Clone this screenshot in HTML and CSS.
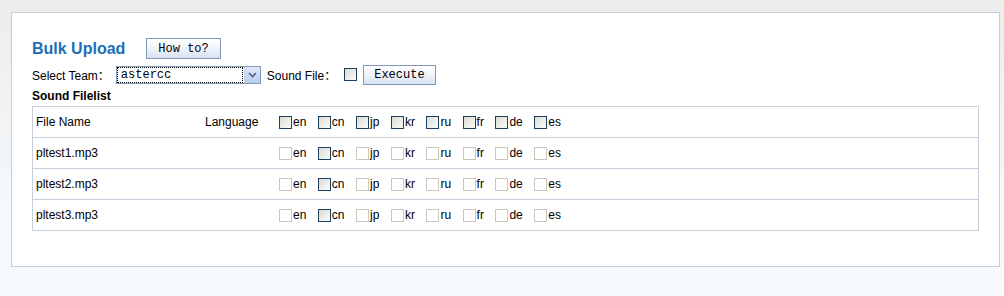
FILE: index.html
```html
<!DOCTYPE html>
<html lang="en">
<head>
  <meta charset="UTF-8">
  <title>Bulk Upload</title>
  <link rel="stylesheet" href="styles.css">
</head>
<body>
  <div class="panel">
    <div class="title-row">
      <h2 class="title">Bulk Upload</h2>
      <button class="btn">How to?</button>
    </div>

    <div class="form-row">
      <span class="label">Select Team：</span>
      <div class="select">
        <span class="select-value">astercc</span>
        <span class="select-arrow">
          <svg width="9" height="6" viewBox="0 0 9 6"><path d="M1 1 L4.5 4.5 L8 1" fill="none" stroke="#4d6185" stroke-width="1.6"/></svg>
        </span>
      </div>
      <span class="label sound">Sound File：</span>
      <span class="box box-plain"></span>
      <button class="btn btn-exec">Execute</button>
    </div>

    <div class="subtitle">Sound Filelist</div>

    <div class="filelist" id="filelist"></div>
  </div>

  <script>
    const langs = ['en', 'cn', 'jp', 'kr', 'ru', 'fr', 'de', 'es'];
    const rows = [
      { name: 'File Name', lang: 'Language', header: true },
      { name: 'pltest1.mp3' },
      { name: 'pltest2.mp3' },
      { name: 'pltest3.mp3' }
    ];
    const list = document.getElementById('filelist');

    rows.forEach(row => {
      const div = document.createElement('div');
      div.className = 'row';

      const name = document.createElement('span');
      name.className = 'cell-name';
      name.textContent = row.name;
      div.appendChild(name);

      const lang = document.createElement('span');
      lang.className = 'cell-lang';
      lang.textContent = row.lang || '';
      div.appendChild(lang);

      const opts = document.createElement('span');
      opts.className = 'opts';
      langs.forEach(l => {
        const box = document.createElement('span');
        // header boxes are all active, rows only allow cn
        box.className = 'box ' + (row.header || l === 'cn' ? 'box-on' : 'box-off');
        const txt = document.createElement('span');
        txt.className = 'opt-label';
        txt.textContent = l;
        opts.appendChild(box);
        opts.appendChild(txt);
      });
      div.appendChild(opts);

      list.appendChild(div);
    });
  </script>
</body>
</html>
```

FILE: styles.css
```css
body {
  margin: 0;
  padding: 12px 4px 0 11px;
  height: 296px;
  box-sizing: border-box;
  background: linear-gradient(#ececec, #f5f9fc 70%, #f7fbfe);
  font-family: "Liberation Sans", Arial, "Noto Sans CJK SC", sans-serif;
  font-size: 12px;
  color: #000;
}

.panel {
  background: #fff;
  border: 1px solid #c7cdd3;
  height: 255px;
  box-sizing: border-box;
  padding: 25px 20px 0 20px;
}

.title-row {
  display: flex;
  align-items: center;
  height: 21px;
}

.title {
  margin: 0 21px 0 0;
  font-size: 16px;
  font-weight: bold;
  color: #1b6fb7;
}

.btn {
  font-family: "Liberation Mono", "Courier New", monospace;
  font-size: 12px;
  color: #000;
  height: 21px;
  padding: 0 11px;
  border: 1px solid #7f9ab8;
  border-radius: 0;
  background: linear-gradient(#ffffff, #f1f5fb 45%, #d7e2f1);
  cursor: pointer;
}

.form-row {
  display: flex;
  align-items: center;
  height: 21px;
  margin-top: 5px;
}

.label {
  margin-right: 6px;
}

.label.sound {
  margin-left: 6px;
  margin-right: 8px;
}

.select {
  display: flex;
  width: 145px;
  height: 18px;
  box-sizing: border-box;
  border: 1px solid #7f9db9;
}

.select-value {
  flex: 1;
  font-family: "Liberation Mono", "Courier New", monospace;
  font-size: 12px;
  line-height: 14px;
  padding-left: 3px;
  border: 1px dotted #000;
  margin: 0 1px 0 0;
}

.select-arrow {
  width: 15px;
  display: flex;
  align-items: center;
  justify-content: center;
  background: linear-gradient(#dfe8f7, #b9cdef);
  border-left: 1px solid #c3d3ee;
}

.btn-exec {
  margin-left: 6px;
  height: 20px;
  padding: 0 10px;
}

.subtitle {
  font-weight: bold;
  margin-top: 4px;
  height: 17px;
}

.filelist {
  width: 945px;
  border: 1px solid #c6d0dc;
}

.row {
  display: flex;
  align-items: center;
  height: 30px;
  border-top: 1px solid #c6d0dc;
}

.row:first-child {
  border-top: none;
}

.cell-name {
  width: 169px;
  padding-left: 3px;
}

.cell-lang {
  width: 74px;
}

.opts {
  display: flex;
  align-items: center;
}

.box {
  display: inline-block;
  width: 13px;
  height: 13px;
  box-sizing: border-box;
}

.box-on {
  border: 1px solid #1c3f60;
  background: linear-gradient(135deg, #dcdcd6, #fbfbf8);
}

.box-off {
  border: 1px solid #cac8bb;
  background: #fff;
}

.box-plain {
  border: 1px solid #1c3f60;
  background: linear-gradient(135deg, #dcdcd6, #fbfbf8);
}

.opt-label {
  margin-left: 1px;
  margin-right: 11.5px;
}
```
